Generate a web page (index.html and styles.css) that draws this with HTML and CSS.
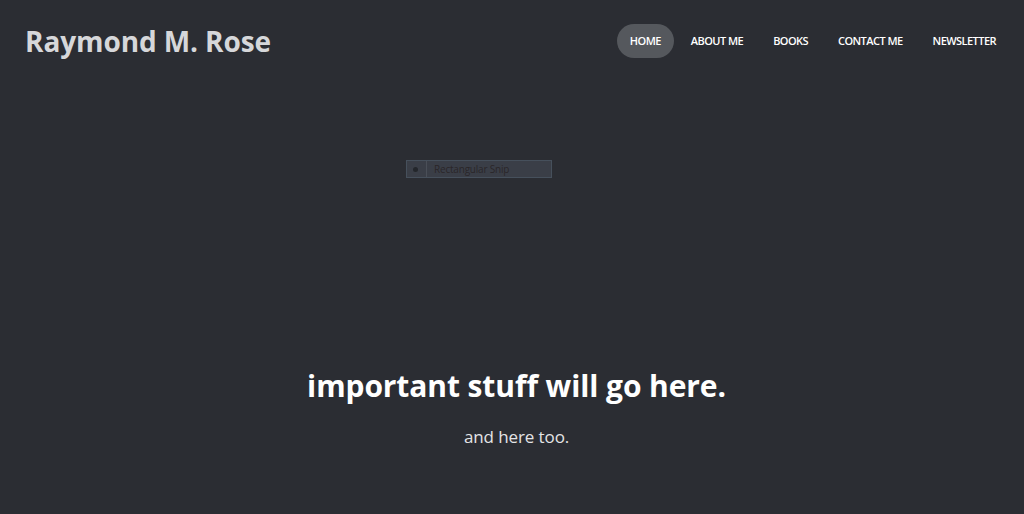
FILE: index.html
```html
<!DOCTYPE html>
<html lang="en">

<head>
    <meta charset="UTF-8">
    <meta name="viewport" content="width=device-width, initial-scale=1.0">
    <title>Raymond M. Rose</title>
    <link rel="stylesheet" href="styles.css">
</head>

<body>
    <div class="page">
        <header class="masthead">
            <h3 class="brand">Raymond M. Rose</h3>
            <nav class="nav">
                <a class="nav-link active" href="#">Home</a>
                <a class="nav-link" href="#">About Me</a>
                <a class="nav-link" href="#">Books</a>
                <a class="nav-link" href="#">Contact Me</a>
                <a class="nav-link" href="#">Newsletter</a>
            </nav>
        </header>

        <!-- leftover from a screen snip -->
        <div class="snip">
            <span class="snip-dot"></span>
            <span class="snip-label">Rectangular Snip</span>
        </div>

        <main class="cover">
            <h1 class="cover-heading">important stuff will go here.</h1>
            <p class="lead">and here too.</p>
        </main>
    </div>
</body>

</html>
```

FILE: styles.css
```css
body {
    font-family: "Open Sans", sans-serif;
    background-color: #2b2d33;
    color: #fff;
    margin: 0;
    height: 100vh;
}

.page {
    position: relative;
    height: 100%;
    display: flex;
    flex-direction: column;
}

.masthead {
    display: flex;
    justify-content: space-between;
    align-items: center;
    padding: 23px 15px 0 25px;
}

.brand {
    margin: 0;
    font-size: 28px;
    line-height: 36px;
    font-weight: 700;
    color: #d6d7da;
    letter-spacing: -0.1px;
}

.nav {
    display: flex;
    gap: 4px;
}

.nav-link {
    display: block;
    height: 34px;
    line-height: 34px;
    padding: 0 13px;
    border-radius: 17px;
    color: #fff;
    text-decoration: none;
    text-transform: uppercase;
    font-size: 11px;
    font-weight: 600;
    letter-spacing: -0.55px;
}

.nav-link.active {
    background-color: #55585d;
}

.snip {
    position: absolute;
    left: 406px;
    top: 160px;
    width: 146px;
    height: 18px;
    display: flex;
    align-items: center;
    background-color: #3a3e47;
    border: 1px solid #46505c;
    box-sizing: border-box;
}

.snip-dot {
    width: 5px;
    height: 5px;
    margin: 0 8px 0 6px;
    border-radius: 50%;
    background-color: #23262b;
}

.snip-label {
    flex: 1;
    height: 100%;
    border-left: 1px solid #4a4f58;
    padding-left: 7px;
    font-size: 10px;
    line-height: 16px;
    letter-spacing: -0.2px;
    color: #2a2629;
}

.cover {
    text-align: center;
    margin-top: auto;
    padding: 0 0 66px 9px;
}

.cover-heading {
    margin: 0 0 19px;
    font-size: 30px;
    font-weight: 700;
    letter-spacing: -0.1px;
}

.lead {
    margin: 0;
    font-size: 17px;
    letter-spacing: -0.1px;
    color: #e4e4e6;
}
```
